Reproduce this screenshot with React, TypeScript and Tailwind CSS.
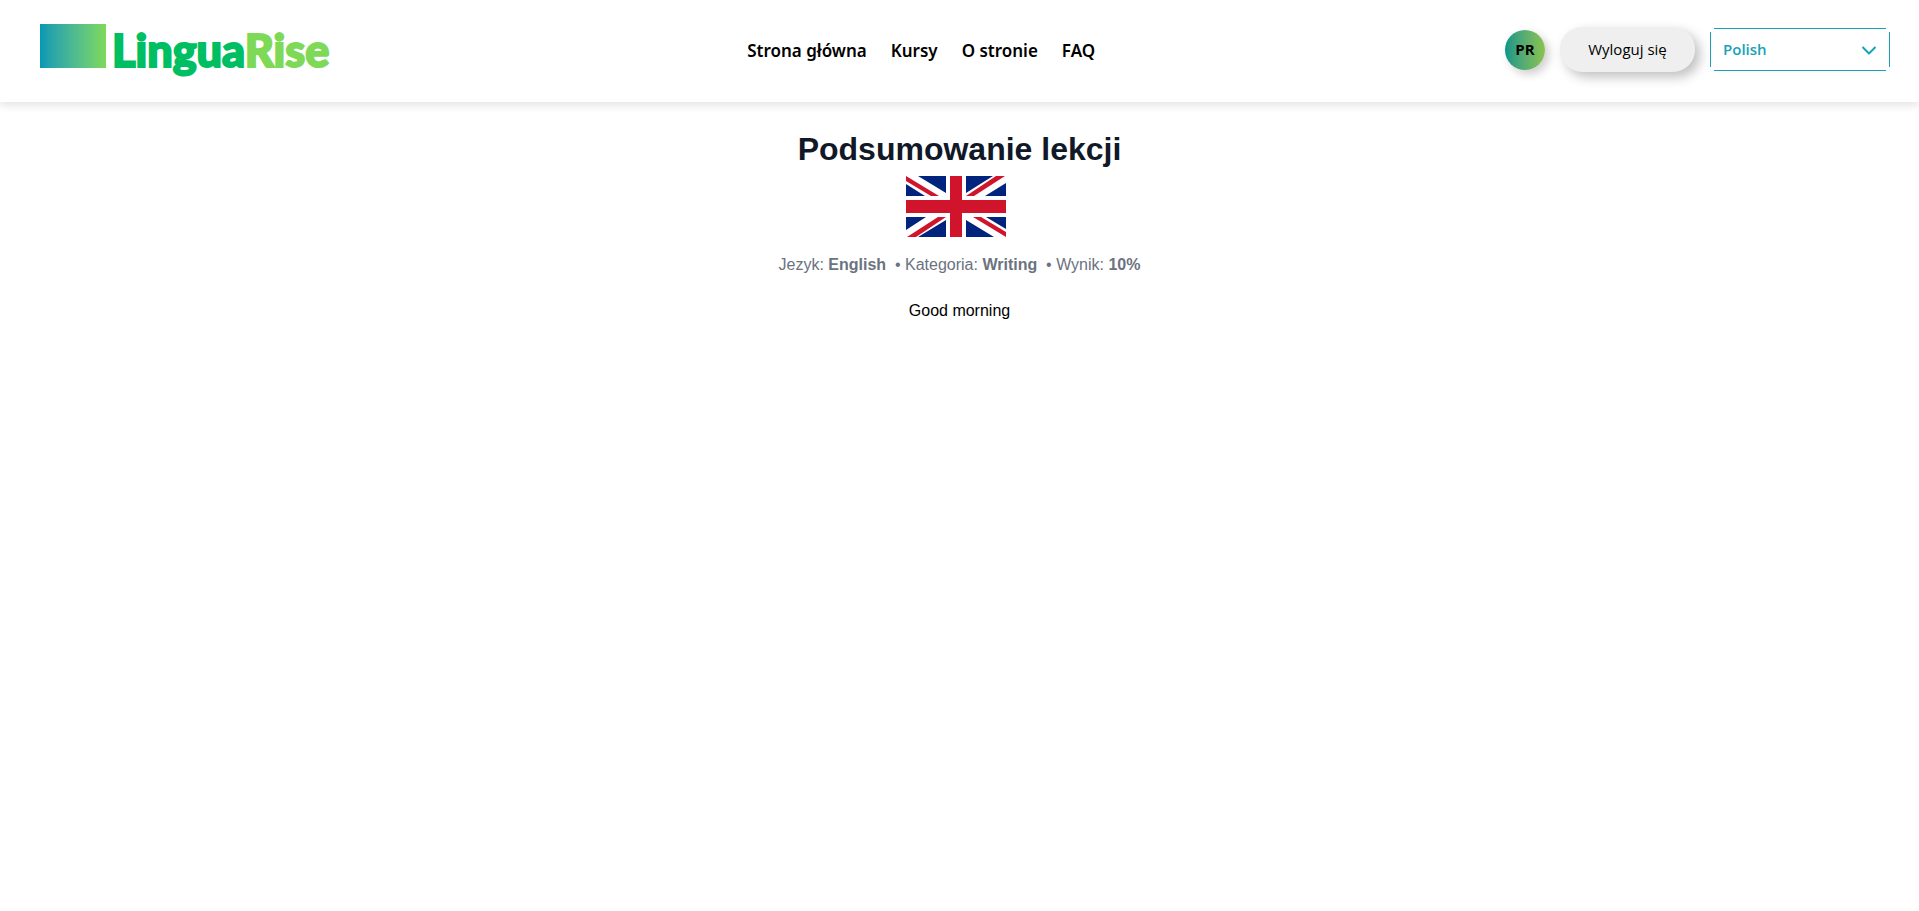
const links = [
  { label: "Strona główna", href: "#home" },
  { label: "Kursy", href: "#courses" },
  { label: "O stronie", href: "#about" },
  { label: "FAQ", href: "#faq" },
];

function Logo() {
  return (
    <a href="#home" className="flex items-start gap-1.5 pr-2 font-[Lato,sans-serif]">
      <span className="h-11 w-[66px] bg-linear-to-r from-[#0498b4] to-[#7ed957]" />
      <span className="text-[45px] leading-[52px] font-black text-[#00bf63] [-webkit-text-stroke:2px_currentColor]">
        Lingua<span className="text-[#7ed957]">Rise</span>
      </span>
    </a>
  );
}

function LanguageSelect() {
  return (
    <div className="relative h-[43px] w-[180px] text-[#17a2b8] before:pointer-events-none before:absolute before:inset-x-0 before:inset-y-1 before:border-x before:border-current after:pointer-events-none after:absolute after:inset-x-1 after:inset-y-0 after:border-y after:border-current">
      <select
        aria-label="Język"
        defaultValue="pl"
        className="h-full w-full appearance-none bg-white px-[13px] text-[15px] font-semibold"
      >
        <option value="pl">Polish</option>
        <option value="en">English</option>
      </select>
      <svg
        viewBox="0 0 16 16"
        className="pointer-events-none absolute top-3.5 right-[13px] h-4 w-4"
        fill="none"
        stroke="currentColor"
        strokeWidth="2"
      >
        <path d="M1.5 5l6.5 6.5L14.5 5" strokeLinejoin="round" />
      </svg>
    </div>
  );
}

function UnionFlag() {
  return (
    <svg viewBox="0 0 100 61" role="img" aria-label="English" className="mr-2 h-[61px] w-[100px]">
      <rect width="100" height="61" fill="#fff" />
      <path
        fill="#00247d"
        d="M12 0H40V17zM0 8V20H19zM60 0H87L60 17zM100 7V20H79zM0 41H20L0 54zM40 44V61H12zM60 44L88 61H60zM80 41H100V53z"
      />
      <g fill="#cf142b">
        <path d="M44 0H56V24H100V37H56V61H44V37H0V24H44z" />
        <path d="M0 0L33 20H25L0 5zM90 0H99L68 20H60zM1 61L32 41H40L10 61zM67 41H75L100 56V61z" />
      </g>
    </svg>
  );
}

export default function App() {
  return (
    <div className="min-h-screen bg-white font-['Liberation_Sans',Arial,sans-serif] text-black">
      <header className="flex h-[102px] items-center justify-between pr-[29px] pb-[3px] pl-10 font-['Open_Sans',sans-serif] shadow-[0_4px_8px_rgba(0,0,0,0.1)]">
        <Logo />
        <nav className="flex gap-6 pt-0.5 font-['Noto_Sans',sans-serif] text-[17px] font-semibold">
          {links.map((link) => (
            <a key={link.href} href={link.href}>
              {link.label}
            </a>
          ))}
        </nav>
        <div className="flex items-center gap-[15px]">
          <button className="h-10 w-10 rounded-full bg-linear-to-r from-[#009688] to-[#8bc34a] text-[15px] font-bold shadow-[4px_4px_10px_rgba(0,0,0,0.2)]">
            PR
          </button>
          <button className="h-[45px] w-[135px] rounded-[22px] bg-[#efefef] text-[15px] shadow-[5px_5px_12px_rgba(0,0,0,0.25)]">
            Wyloguj się
          </button>
          <LanguageSelect />
        </div>
      </header>
      <main className="flex flex-col items-center pt-7">
        <h1 className="text-[32px] leading-[38px] font-bold text-[#111827]">Podsumowanie lekcji</h1>
        <div className="mt-2">
          <UnionFlag />
        </div>
        <p className="mt-4 text-base text-[#6b7280]">
          Jezyk: <strong>English</strong> &nbsp;• Kategoria: <strong>Writing</strong> &nbsp;• Wynik: <strong>10%</strong>
        </p>
        <p className="mt-[22px] text-base">Good morning</p>
      </main>
    </div>
  );
}
